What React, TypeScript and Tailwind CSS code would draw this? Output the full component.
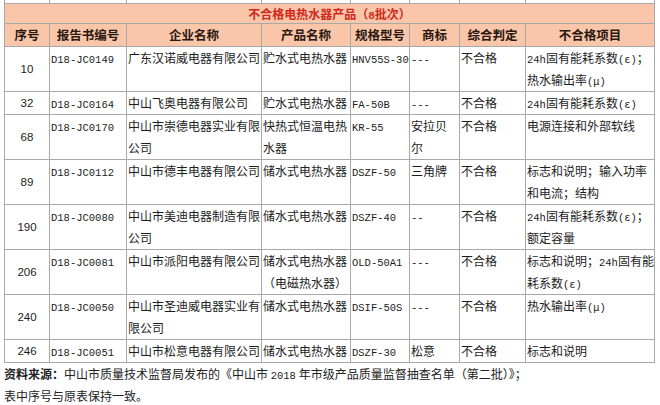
const cjk = "font-['Noto_Sans_CJK_SC',sans-serif]";

// half-width latin pieces look like SimSun's mono glyphs
function M({ children }: { children: string }) {
  return <span className="font-['Liberation_Mono',monospace] text-[10.5px] leading-none">{children}</span>;
}

function renderLine(line: string) {
  const parts = line.split(/([A-Za-z0-9\-()εμ]+)/);
  return parts.map((p, i) =>
    /^[A-Za-z0-9\-()εμ]+$/.test(p) ? <M key={i}>{p}</M> : <span key={i}>{p}</span>
  );
}

type Row = {
  no: string;
  code: string;
  company: string[];
  product: string[];
  model: string;
  brand: string[];
  result: string;
  items: string[];
};

const rows: Row[] = [
  { no: '10', code: 'D18-JC0149', company: ['广东汉诺威电器有限公司'], product: ['贮水式电热水器'], model: 'HNV55S-30', brand: ['---'], result: '不合格', items: ['24h固有能耗系数(ε)；', '热水输出率(μ)'] },
  { no: '32', code: 'D18-JC0164', company: ['中山飞奥电器有限公司'], product: ['贮水式电热水器'], model: 'FA-50B', brand: ['---'], result: '不合格', items: ['24h固有能耗系数(ε)'] },
  { no: '68', code: 'D18-JC0170', company: ['中山市崇德电器实业有限', '公司'], product: ['快热式恒温电热', '水器'], model: 'KR-55', brand: ['安拉贝', '尔'], result: '不合格', items: ['电源连接和外部软线'] },
  { no: '89', code: 'D18-JC0112', company: ['中山市德丰电器有限公司'], product: ['储水式电热水器'], model: 'DSZF-50', brand: ['三角牌'], result: '不合格', items: ['标志和说明；输入功率', '和电流；结构'] },
  { no: '190', code: 'D18-JC0080', company: ['中山市美迪电器制造有限', '公司'], product: ['储水式电热水器'], model: 'DSZF-40', brand: ['--'], result: '不合格', items: ['24h固有能耗系数(ε)；', '额定容量'] },
  { no: '206', code: 'D18-JC0081', company: ['中山市派阳电器有限公司'], product: ['储水式电热水器', '（电磁热水器）'], model: 'OLD-50A1', brand: ['---'], result: '不合格', items: ['标志和说明；24h固有能', '耗系数(ε)'] },
  { no: '240', code: 'D18-JC0050', company: ['中山市圣迪威电器实业有', '限公司'], product: ['储水式电热水器'], model: 'DSIF-50S', brand: ['---'], result: '不合格', items: ['热水输出率(μ)'] },
  { no: '246', code: 'D18-JC0051', company: ['中山市松意电器有限公司'], product: ['储水式电热水器'], model: 'DSZF-30', brand: ['松意'], result: '不合格', items: ['标志和说明'] },
];

const headers = ['序号', '报告书编号', '企业名称', '产品名称', '规格型号', '商标', '综合判定', '不合格项目'];

function Lines({ lines }: { lines: string[] }) {
  return (
    <>
      {lines.map((l, i) => (
        <div key={i} className="h-[22px] whitespace-nowrap">
          {renderLine(l)}
        </div>
      ))}
    </>
  );
}

export default function App() {
  const td = 'border border-[#a9a9a9] px-[1px] py-0 align-top leading-[22px] overflow-hidden';
  return (
    <div className={`w-[660px] h-[405px] bg-white text-[12px] text-[#1c1c1c] overflow-hidden ${cjk}`}>
      <table className="ml-[4px] w-[650px] table-fixed border-collapse">
        <colgroup>
          <col className="w-[45px]" />
          <col className="w-[77px]" />
          <col className="w-[135px]" />
          <col className="w-[89px]" />
          <col className="w-[59px]" />
          <col className="w-[50px]" />
          <col className="w-[66px]" />
          <col className="w-[129px]" />
        </colgroup>
        <tbody>
          <tr>
            {headers.map((h) => (
              <td key={h} className="h-[3px] p-0 border-x border-b border-[#a9a9a9] leading-none text-[0px]" />
            ))}
          </tr>
          <tr className="bg-[#f9c6aa]">
            <td colSpan={8} className="h-[20px] border border-[#a9a9a9] p-0 text-center font-bold text-[#d2281c] leading-[19px]">
              不合格电热水器产品（<span className="font-['Liberation_Mono',monospace] text-[11px] leading-none">8</span>批次）
            </td>
          </tr>
          <tr className="bg-[#f9c6aa]">
            {headers.map((h) => (
              <td key={h} className="h-[23px] border border-[#a9a9a9] p-0 text-center align-middle font-bold text-[#2a1710] text-[12.5px] leading-[22px]">
                {h}
              </td>
            ))}
          </tr>
          {rows.map((r) => (
            <tr key={r.no}>
              <td className={`${td} !align-middle text-center font-['Liberation_Sans',sans-serif] text-[11.5px]`}>{r.no}</td>
              <td className={td}>
                <Lines lines={[r.code]} />
              </td>
              <td className={td}>
                <Lines lines={r.company} />
              </td>
              <td className={td}>
                <Lines lines={r.product} />
              </td>
              <td className={td}>
                <Lines lines={[r.model]} />
              </td>
              <td className={td}>
                <Lines lines={r.brand} />
              </td>
              <td className={td}>
                <Lines lines={[r.result]} />
              </td>
              <td className={td}>
                <Lines lines={r.items} />
              </td>
            </tr>
          ))}
        </tbody>
      </table>
      <div className="pl-[4px] leading-[22px] text-[12px] text-[#222]">
        <div className="h-[22px] whitespace-nowrap">
          <span className="font-bold">资料来源：</span>中山市质量技术监督局发布的《中山市 <M>2018</M> 年市级产品质量监督抽查名单（第二批）》；
        </div>
        <div className="h-[22px]">表中序号与原表保持一致。</div>
      </div>
    </div>
  );
}
